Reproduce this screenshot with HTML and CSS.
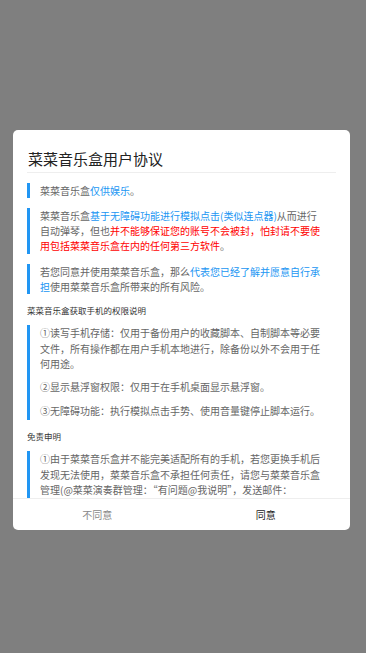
FILE: index.html
```html
<!DOCTYPE html>
<html lang="zh-CN">
<head>
<meta charset="utf-8">
<meta name="viewport" content="width=device-width, initial-scale=1">
<title>菜菜音乐盒用户协议</title>
<link rel="stylesheet" href="styles.css">
</head>
<body>
<div class="dialog">
  <div class="header">
    <h1 class="title">菜菜音乐盒用户协议</h1>
  </div>
  <div class="content">
    <div class="block">菜菜音乐盒<span class="blue">仅供娱乐</span>。</div>
    <div class="block">菜菜音乐盒<span class="blue">基于无障碍功能进行模拟点击(类似连点器)</span>从而进行自动弹琴，但也<span class="red">并不能够保证您的账号不会被封，怕封请不要使用包括菜菜音乐盒在内的任何第三方软件</span>。</div>
    <div class="block">若您同意并使用菜菜音乐盒，那么<span class="blue">代表您已经了解并愿意自行承担</span>使用菜菜音乐盒所带来的所有风险。</div>
    <div class="heading">菜菜音乐盒获取手机的权限说明</div>
    <div class="block list">
      <p>①读写手机存储：仅用于备份用户的收藏脚本、自制脚本等必要文件，所有操作都在用户手机本地进行，除备份以外不会用于任何用途。</p>
      <p>②显示悬浮窗权限：仅用于在手机桌面显示悬浮窗。</p>
      <p>③无障碍功能：执行模拟点击手势、使用音量键停止脚本运行。</p>
    </div>
    <div class="heading">免责申明</div>
    <div class="block list">
      <p>①由于菜菜音乐盒并不能完美适配所有的手机，若您更换手机后发现无法使用，菜菜音乐盒不承担任何责任，请您与菜菜音乐盒管理(@菜菜演奏群管理：“有问题@我说明”，发送邮件：</p>
    </div>
  </div>
  <div class="footer">
    <div class="btn btn-cancel">不同意</div>
    <div class="btn btn-ok">同意</div>
  </div>
</div>
</body>
</html>
```

FILE: styles.css
```css
html, body {
  margin: 0;
  padding: 0;
}
body {
  background: #7f7f7f;
  width: 366px;
  height: 653px;
  padding-top: 130px;
  padding-left: 13px;
  box-sizing: border-box;
  font-family: "Noto Sans CJK SC", "Noto Sans", sans-serif;
}
.dialog {
  width: 337px;
  height: 400px;
  background: #fff;
  border-radius: 5px;
  display: flex;
  flex-direction: column;
  overflow: hidden;
}
.header {
  margin: 0 14px;
  padding: 18px 0 2px 1px;
  border-bottom: 1px solid #eeeeee;
}
.title {
  margin: 0;
  font-size: 15px;
  line-height: 22px;
  font-weight: normal;
  color: #222;
}
.content {
  flex: 1;
  overflow: hidden;
  padding: 9.5px 14px 0 14px;
}
.block {
  border-left: 3px solid #2196f3;
  padding: 0 12px 0 10px;
  margin-bottom: 10px;
  font-size: 10px;
  line-height: 15.3px;
  color: #666;
}
.block p {
  margin: 0;
}
.block.list p + p {
  margin-top: 8.3px;
}
.block.list {
  padding-bottom: 2px;
}
.blue {
  color: #2196f3;
}
.red {
  color: #ff0000;
}
.heading {
  font-size: 8.5px;
  line-height: 12px;
  color: #333;
  margin: 4px 0 9px 0;
}
.footer {
  display: flex;
  height: 31px;
  border-top: 1px solid #eeeeee;
}
.btn {
  flex: 1;
  display: flex;
  align-items: center;
  justify-content: center;
  font-size: 10px;
}
.btn-cancel {
  color: #888;
}
.btn-ok {
  color: #222;
}
```
